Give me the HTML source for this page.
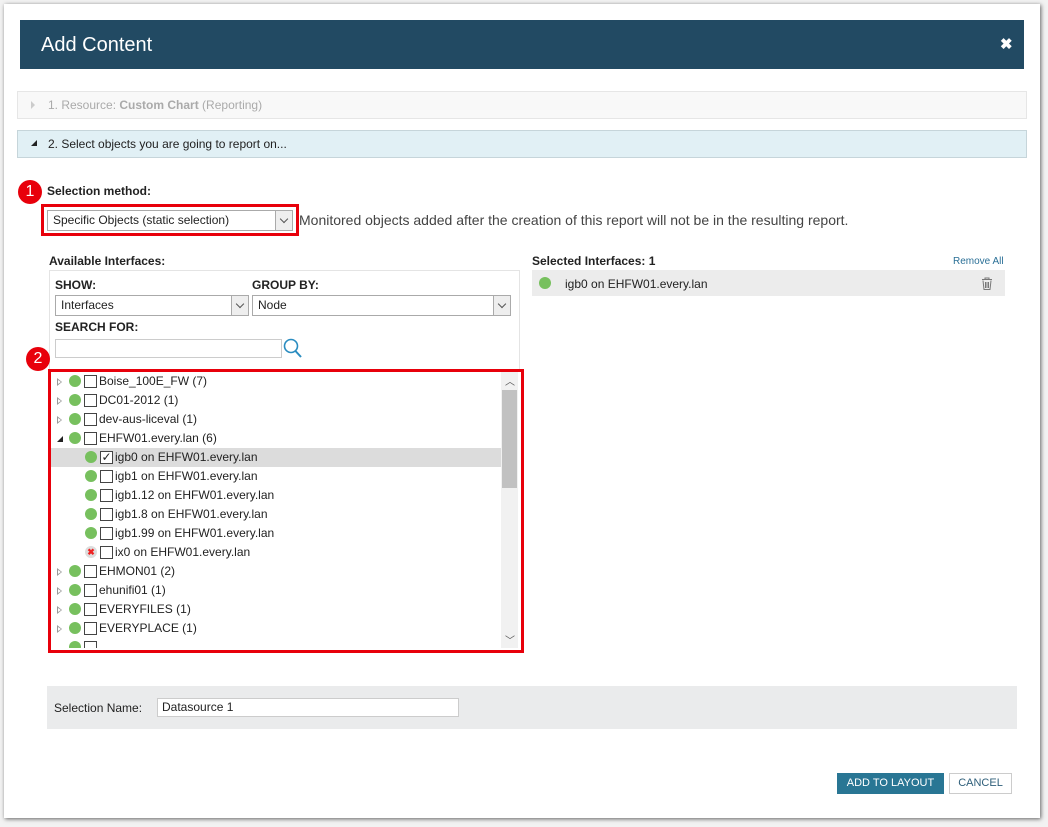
<!DOCTYPE html>
<html><head><style>
*{box-sizing:border-box;margin:0;padding:0}
body{width:1048px;height:827px;background:#f2f2f2;font-family:"Liberation Sans",sans-serif;font-size:12px;color:#222;position:relative;overflow:hidden}
.abs{position:absolute}
#panel{left:4px;top:4px;width:1036px;height:814px;background:#fff;box-shadow:1px 1px 4px rgba(0,0,0,.6)}
.sel{position:absolute;border:1px solid #aaa;background:#fff;font-size:12px;padding:2px 5px;height:21px;line-height:15px}
.sel .ar{position:absolute;right:0;top:0;width:17px;height:19px;border-left:1px solid #aaa;background:#eee}
.sel .ar:after{content:"";position:absolute;left:5px;top:5px;width:5px;height:5px;border-right:1px solid #555;border-bottom:1px solid #555;transform:rotate(45deg)}
.row{position:absolute;left:51px;width:450px;height:19px;font-size:12px;line-height:19px}
.dot{position:absolute;width:12px;height:12px;border-radius:50%;background:#77c05e;top:3px}
.cb{position:absolute;width:13px;height:13px;border:1px solid #444;background:#fff;top:3px}
.tri{position:absolute;left:6px;top:6px;width:0;height:0;border-left:5px solid #999;border-top:4px solid transparent;border-bottom:4px solid transparent}
.tri:after{content:"";position:absolute;left:-4px;top:-2px;border-left:3px solid #fff;border-top:2px solid transparent;border-bottom:2px solid transparent}
.b{font-weight:bold}
.badge{position:absolute;width:24px;height:24px;border-radius:50%;background:#e8000b;color:#fff;font-size:16px;text-align:center;line-height:24px}
</style></head><body>
<div id="panel" class="abs"></div>
<div class="abs" style="left:20px;top:20px;width:1004px;height:49px;background:#224a63"></div>
<div class="abs" style="left:41px;top:34px;color:#fff;font-size:20px">Add Content</div>
<div class="abs" style="left:1000px;top:35px;color:#fff;font-size:15px;font-weight:bold">✖</div>

<div class="abs" style="left:17px;top:91px;width:1010px;height:28px;background:#f8f8f8;border:1px solid #e6e6e6"></div>
<div class="abs" style="left:31px;top:101px;width:0;height:0;border-left:4px solid #ccc;border-top:4px solid transparent;border-bottom:4px solid transparent"></div>
<div class="abs" style="left:48px;top:98px;color:#aaa;font-size:12px">1. Resource: <b>Custom Chart</b> (Reporting)</div>

<div class="abs" style="left:17px;top:130px;width:1010px;height:28px;background:#e1f0f5;border:1px solid #c6d5da"></div>
<div class="abs" style="left:31px;top:140px;width:0;height:0;border-bottom:6px solid #222;border-left:6px solid transparent"></div>
<div class="abs" style="left:48px;top:137px;font-size:12px">2. Select objects you are going to report on...</div>

<div class="badge" style="left:18px;top:180px">1</div>
<div class="abs b" style="left:47px;top:184px">Selection method:</div>
<div class="abs" style="left:41px;top:204px;width:258px;height:32px;border:3px solid #e8000b"></div>
<div class="sel" style="left:47px;top:210px;width:246px"><span>Specific Objects (static selection)</span><div class="ar"></div></div>
<div class="abs" style="left:299px;top:212px;font-size:14px;color:#444">Monitored objects added after the creation of this report will not be in the resulting report.</div>

<div class="abs b" style="left:49px;top:254px">Available Interfaces:</div>
<div class="abs" style="left:49px;top:270px;width:471px;height:100px;border:1px solid #e4e4e4;border-bottom:none"></div>
<div class="abs b" style="left:55px;top:278px">SHOW:</div>
<div class="abs b" style="left:252px;top:278px">GROUP BY:</div>
<div class="sel" style="left:55px;top:295px;width:194px">Interfaces<div class="ar"></div></div>
<div class="sel" style="left:252px;top:295px;width:259px">Node<div class="ar"></div></div>
<div class="abs b" style="left:55px;top:320px">SEARCH FOR:</div>
<div class="abs" style="left:55px;top:339px;width:227px;height:19px;border:1px solid #ccc"></div>
<svg class="abs" style="left:283px;top:338px" width="20" height="22" viewBox="0 0 20 22"><circle cx="8" cy="8" r="6.5" fill="none" stroke="#2a8cc0" stroke-width="1.6"/><path d="M12.5 13 L18 19" stroke="#2a8cc0" stroke-width="2"/></svg>

<div class="badge" style="left:26px;top:347px">2</div>
<div class="abs" style="left:48px;top:369px;width:476px;height:284px;border:3px solid #e8000b"></div>
<div class="abs" style="left:501px;top:372px;width:17px;height:276px;background:#f1f1f1"></div>
<div class="abs" style="left:502px;top:390px;width:15px;height:98px;background:#c1c1c1"></div>
<div class="abs" style="left:505px;top:373px;font-size:10px;color:#555">︿</div>
<div class="abs" style="left:505px;top:632px;font-size:10px;color:#555">﹀</div>

<div class="row" style="top:372px"><div class="tri"></div><div class="dot" style="left:18px"></div><div class="cb" style="left:33px"></div><span style="position:absolute;left:48px">Boise_100E_FW (7)</span></div>
<div class="row" style="top:391px"><div class="tri"></div><div class="dot" style="left:18px"></div><div class="cb" style="left:33px"></div><span style="position:absolute;left:48px">DC01-2012 (1)</span></div>
<div class="row" style="top:410px"><div class="tri"></div><div class="dot" style="left:18px"></div><div class="cb" style="left:33px"></div><span style="position:absolute;left:48px">dev-aus-liceval (1)</span></div>
<div class="row" style="top:429px"><div style="position:absolute;left:6px;top:7px;border-bottom:6px solid #222;border-left:6px solid transparent"></div><div class="dot" style="left:18px"></div><div class="cb" style="left:33px"></div><span style="position:absolute;left:48px">EHFW01.every.lan (6)</span></div>
<div class="row" style="top:448px;background:#dcdcdc"><div class="dot" style="left:34px"></div><div class="cb" style="left:49px;font-size:12px;line-height:10px;text-align:center">✓</div><span style="position:absolute;left:64px">igb0 on EHFW01.every.lan</span></div>
<div class="row" style="top:467px"><div class="dot" style="left:34px"></div><div class="cb" style="left:49px"></div><span style="position:absolute;left:64px">igb1 on EHFW01.every.lan</span></div>
<div class="row" style="top:486px"><div class="dot" style="left:34px"></div><div class="cb" style="left:49px"></div><span style="position:absolute;left:64px">igb1.12 on EHFW01.every.lan</span></div>
<div class="row" style="top:505px"><div class="dot" style="left:34px"></div><div class="cb" style="left:49px"></div><span style="position:absolute;left:64px">igb1.8 on EHFW01.every.lan</span></div>
<div class="row" style="top:524px"><div class="dot" style="left:34px"></div><div class="cb" style="left:49px"></div><span style="position:absolute;left:64px">igb1.99 on EHFW01.every.lan</span></div>
<div class="row" style="top:543px"><div class="dot" style="left:34px;background:#ddd;color:#e22;font-size:9px;line-height:12px;text-align:center;font-weight:bold">✖</div><div class="cb" style="left:49px"></div><span style="position:absolute;left:64px">ix0 on EHFW01.every.lan</span></div>
<div class="row" style="top:562px"><div class="tri"></div><div class="dot" style="left:18px"></div><div class="cb" style="left:33px"></div><span style="position:absolute;left:48px">EHMON01 (2)</span></div>
<div class="row" style="top:581px"><div class="tri"></div><div class="dot" style="left:18px"></div><div class="cb" style="left:33px"></div><span style="position:absolute;left:48px">ehunifi01 (1)</span></div>
<div class="row" style="top:600px"><div class="tri"></div><div class="dot" style="left:18px"></div><div class="cb" style="left:33px"></div><span style="position:absolute;left:48px">EVERYFILES (1)</span></div>
<div class="row" style="top:619px"><div class="tri"></div><div class="dot" style="left:18px"></div><div class="cb" style="left:33px"></div><span style="position:absolute;left:48px">EVERYPLACE (1)</span></div>
<div class="row" style="top:638px;height:10px;overflow:hidden"><div class="dot" style="left:18px"></div><div class="cb" style="left:33px"></div></div>

<div class="abs b" style="left:532px;top:254px">Selected Interfaces: 1</div>
<div class="abs" style="left:953px;top:256px;font-size:10px;color:#2a6f96">Remove All</div>
<div class="abs" style="left:532px;top:270px;width:473px;height:26px;background:#ececec"></div>
<div class="dot abs" style="left:539px;top:277px"></div>
<div class="abs" style="left:565px;top:277px">igb0 on EHFW01.every.lan</div>
<svg class="abs" style="left:981px;top:277px" width="12" height="13" viewBox="0 0 12 13"><path d="M1 2.5h10M4 2.5V1h4v1.5M2 3.5l1 9h6l1-9M4.5 5v6M6 5v6M7.5 5v6" fill="none" stroke="#777"/></svg>

<div class="abs" style="left:47px;top:686px;width:970px;height:43px;background:#eaebec"></div>
<div class="abs" style="left:54px;top:701px">Selection Name:</div>
<div class="abs" style="left:157px;top:698px;width:302px;height:19px;border:1px solid #ccc;background:#fff;padding:1px 4px">Datasource 1</div>

<div class="abs" style="left:837px;top:773px;width:107px;height:21px;background:#297694;color:#fff;font-size:11px;text-align:center;line-height:21px">ADD TO LAYOUT</div>
<div class="abs" style="left:949px;top:773px;width:63px;height:21px;border:1px solid #ccc;color:#2f5f7a;font-size:11px;text-align:center;line-height:19px">CANCEL</div>
</body></html>
